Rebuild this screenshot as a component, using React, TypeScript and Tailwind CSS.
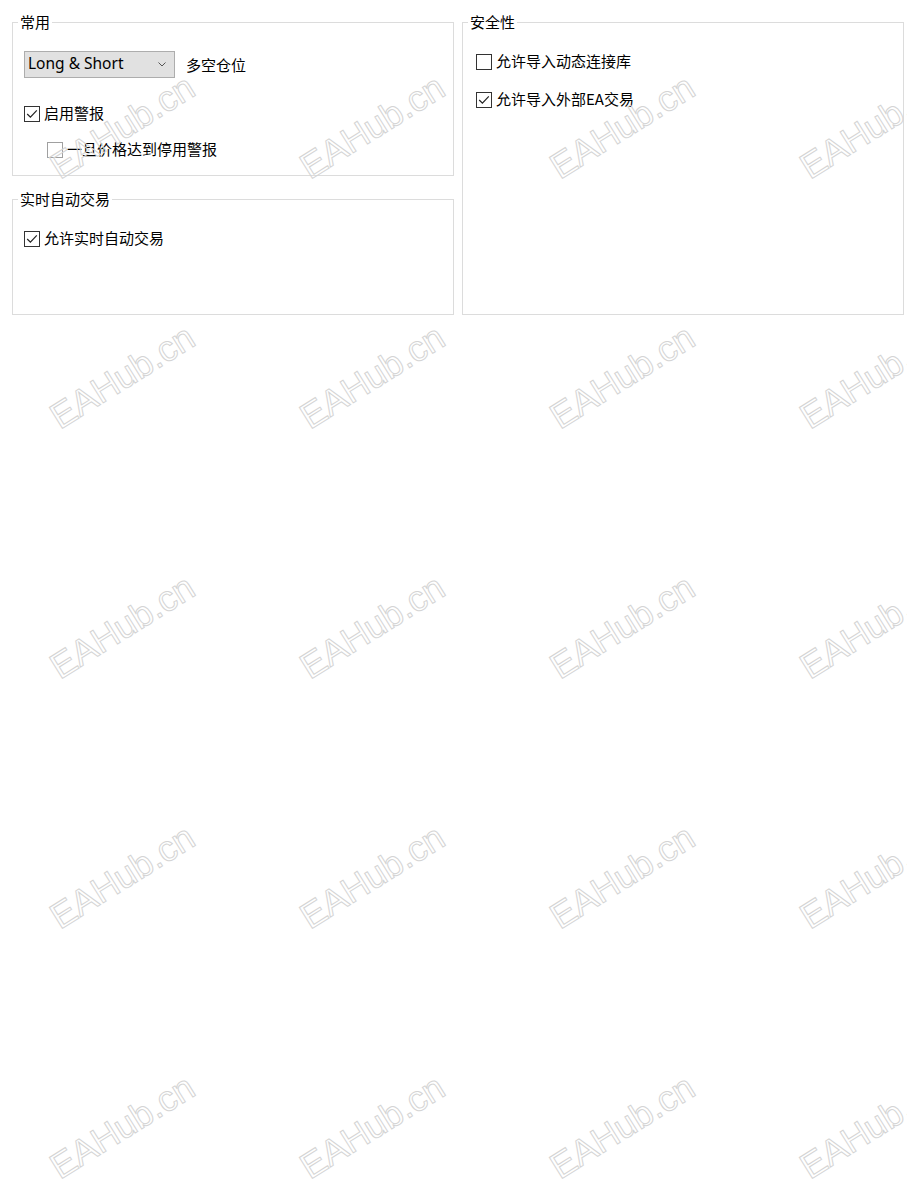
import React from "react";

const CJK = "font-['Microsoft_YaHei','Noto_Sans_CJK_SC',sans-serif]";

function Check({ checked, disabled }: { checked?: boolean; disabled?: boolean }) {
  return (
    <span
      className={`flex h-[16px] w-[16px] shrink-0 items-center justify-center border bg-white ${
        disabled ? "border-[#a0a0a0]" : "border-[#333333]"
      }`}
    >
      {checked && (
        <svg width="14" height="14" viewBox="0 0 14 14" fill="none">
          <path d="M2.2 7 L5.4 10.2 L11.8 3.4" stroke="#222" strokeWidth="1.2" />
        </svg>
      )}
    </span>
  );
}

function CheckRow({
  label,
  checked,
  disabled,
  className = "",
}: {
  label: string;
  checked?: boolean;
  disabled?: boolean;
  className?: string;
}) {
  return (
    <div className={`flex h-[20px] items-center gap-[4px] ${className}`}>
      <Check checked={checked} disabled={disabled} />
      <span className={`${CJK} pb-[2px] text-[15px] leading-[20px] text-black`}>{label}</span>
    </div>
  );
}

function Group({
  title,
  className = "",
  innerClassName = "",
  children,
}: {
  title: string;
  className?: string;
  innerClassName?: string;
  children: React.ReactNode;
}) {
  return (
    <fieldset className={`border border-[#dcdcdc] ${className}`}>
      <legend className={`${CJK} ml-[5px] px-[2px] text-[15px] leading-[20px] text-black`}>
        {title}
      </legend>
      <div className={innerClassName}>{children}</div>
    </fieldset>
  );
}

function Watermarks() {
  const marks: { x: number; y: number }[] = [];
  for (let r = 0; r < 5; r++) {
    for (let c = 0; c < 4; c++) {
      marks.push({ x: 60 + c * 250, y: 180 + r * 250 });
    }
  }
  return (
    <div className="pointer-events-none absolute inset-0 overflow-hidden">
      {marks.map((m, i) => (
        <div
          key={i}
          className="absolute origin-top-left rotate-[-32deg]"
          style={{ left: m.x, top: m.y }}
        >
          <span className="absolute left-0 top-[-30.5px] whitespace-nowrap font-['Liberation_Sans',Arial,sans-serif] text-[36px] leading-[36px] text-transparent [-webkit-text-stroke:1px_#d4d4d4]">
            EAHub.cn
          </span>
        </div>
      ))}
    </div>
  );
}

export default function App() {
  return (
    <div className="relative h-[1200px] w-[907px] overflow-hidden bg-white">
      <div className="grid grid-cols-[442px_442px] gap-x-[8px] pl-[12px] pt-[12px]">
        <div className="flex flex-col gap-[13px]">
          <Group title="常用" className="h-[164px]" innerClassName="px-[11px] pt-[19px]">
            <div className="flex items-center">
              <div className="flex h-[27px] w-[151px] items-center justify-between border border-[#adadad] bg-[#e1e1e1] pl-[3px] pr-[8px]">
                <span className="pb-[3px] font-['Noto_Sans',sans-serif] text-[15.5px] leading-[20px] text-black">
                  Long &amp; Short
                </span>
                <svg width="8" height="5" viewBox="0 0 8 5" fill="none">
                  <path d="M0.5 0.5 L4 4 L7.5 0.5" stroke="#555" strokeWidth="1" />
                </svg>
              </div>
              <span className={`${CJK} ml-[11px] text-[15px] leading-[20px] text-black`}>
                多空仓位
              </span>
            </div>
            <CheckRow label="启用警报" checked className="mt-[26px]" />
            <CheckRow label="一旦价格达到停用警报" disabled className="ml-[23px] mt-[16px]" />
          </Group>
          <Group title="实时自动交易" className="h-[126px]" innerClassName="px-[11px] pt-[20px]">
            <CheckRow label="允许实时自动交易" checked />
          </Group>
        </div>
        <Group title="安全性" className="h-[303px]" innerClassName="pl-[13px] pt-[20px]">
          <CheckRow label="允许导入动态连接库" />
          <CheckRow label="允许导入外部EA交易" checked className="mt-[18px]" />
        </Group>
      </div>
      <Watermarks />
    </div>
  );
}
